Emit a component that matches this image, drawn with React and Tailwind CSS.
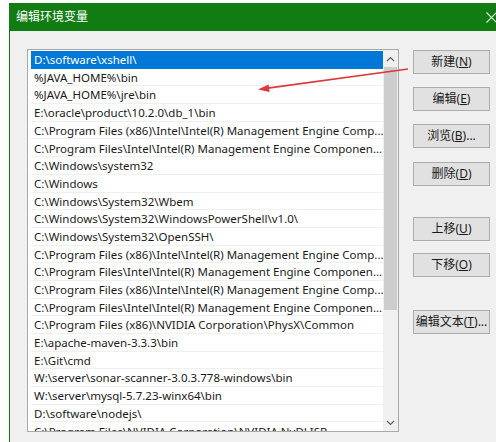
import React from 'react';

const paths = [
  'D:\\software\\xshell\\',
  '%JAVA_HOME%\\bin',
  '%JAVA_HOME%\\jre\\bin',
  'E:\\oracle\\product\\10.2.0\\db_1\\bin',
  'C:\\Program Files (x86)\\Intel\\Intel(R) Management Engine Comp...',
  'C:\\Program Files\\Intel\\Intel(R) Management Engine Componen...',
  'C:\\Windows\\system32',
  'C:\\Windows',
  'C:\\Windows\\System32\\Wbem',
  'C:\\Windows\\System32\\WindowsPowerShell\\v1.0\\',
  'C:\\Windows\\System32\\OpenSSH\\',
  'C:\\Program Files (x86)\\Intel\\Intel(R) Management Engine Comp...',
  'C:\\Program Files\\Intel\\Intel(R) Management Engine Componen...',
  'C:\\Program Files (x86)\\Intel\\Intel(R) Management Engine Comp...',
  'C:\\Program Files\\Intel\\Intel(R) Management Engine Componen...',
  'C:\\Program Files (x86)\\NVIDIA Corporation\\PhysX\\Common',
  'E:\\apache-maven-3.3.3\\bin',
  'E:\\Git\\cmd',
  'W:\\server\\sonar-scanner-3.0.3.778-windows\\bin',
  'W:\\server\\mysql-5.7.23-winx64\\bin',
  'D:\\software\\nodejs\\',
  'C:\\Program Files\\NVIDIA Corporation\\NVIDIA NvDLISR',
];

const buttons = [
  { label: '新建', key: 'N', mt: 'mt-[1px]' },
  { label: '编辑', key: 'E', mt: 'mt-[13px]' },
  { label: '浏览', key: 'B', tail: '...', mt: 'mt-[13px]' },
  { label: '删除', key: 'D', mt: 'mt-[14px]' },
  { label: '上移', key: 'U', mt: 'mt-[31px]' },
  { label: '下移', key: 'O', mt: 'mt-[12px]' },
  { label: '编辑文本', key: 'T', tail: '...', mt: 'mt-[33px]' },
];

const font = { fontFamily: '"Noto Sans", "Noto Sans CJK SC", sans-serif' };

const App = () => {
  return (
    <div className="relative w-[496px] h-[442px] bg-white overflow-hidden" style={font}>
      <div className="ml-[9px] mt-[3px] flex flex-col h-[439px]">
        {/* Title bar */}
        <div className="h-[28px] bg-[#117c12] flex items-center pl-[7px] text-[12px] text-white shrink-0">
          编辑环境变量
        </div>

        {/* Body */}
        <div className="flex-1 bg-[#f0f0f0] border-l border-[#117c12] flex pl-[17px] pt-[18px]">
          {/* List */}
          <div className="w-[372px] h-[383px] border border-[#a9a9a9] bg-white flex overflow-hidden">
            <div className="flex-1 flex flex-col pl-[3px] pt-[1px] overflow-hidden">
              {paths.map((p, i) => (
                <div
                  key={i}
                  className={`h-[17.7px] shrink-0 flex items-center pl-[3px] pt-[1px] text-[11.5px] leading-none whitespace-nowrap overflow-hidden border-b ${
                    i === 0
                      ? 'bg-[#0078d7] text-white border-[#0078d7]'
                      : 'text-[#1a1a1a] border-[#f0f0f0]'
                  }`}
                >
                  {p}
                </div>
              ))}
            </div>

            {/* Scrollbar */}
            <div className="w-[15px] bg-[#f0f0f0] flex flex-col shrink-0">
              <div className="h-[17px] flex items-center justify-center">
                <svg width="9" height="6" viewBox="0 0 9 6">
                  <path d="M1 5 L4.5 1.5 L8 5" fill="none" stroke="#606060" strokeWidth="1.2" />
                </svg>
              </div>
              <div className="h-[243px] mx-[1px] bg-[#cdcdcd]" />
              <div className="flex-1" />
              <div className="h-[17px] flex items-center justify-center">
                <svg width="9" height="6" viewBox="0 0 9 6">
                  <path d="M1 1 L4.5 4.5 L8 1" fill="none" stroke="#606060" strokeWidth="1.2" />
                </svg>
              </div>
            </div>
          </div>

          {/* Buttons */}
          <div className="ml-[14px] flex flex-col">
            {buttons.map((b) => (
              <div
                key={b.key}
                className={`${b.mt} w-[77px] h-[24px] border border-[#adadad] bg-[#e1e1e1] flex items-center justify-center text-[12px] text-[#1a1a1a]`}
              >
                {b.label}(<span className="underline">{b.key}</span>){b.tail}
              </div>
            ))}
          </div>
        </div>
      </div>

      {/* Close X */}
      <svg className="absolute left-[486px] top-[12px]" width="11" height="11" viewBox="0 0 11 11">
        <path d="M0.5 0.5 L10.5 10.5 M10.5 0.5 L0.5 10.5" stroke="#d6f2d6" strokeWidth="1.2" />
      </svg>

      {/* Red annotation arrow */}
      <svg className="absolute left-0 top-0 pointer-events-none" width="496" height="442">
        <line x1="408" y1="69" x2="266" y2="88.4" stroke="#d93a3a" strokeWidth="1.6" />
        <polygon points="258,89.5 269.6,92 268.6,84.4" fill="#d93a3a" />
      </svg>
    </div>
  );
};

export default App;
